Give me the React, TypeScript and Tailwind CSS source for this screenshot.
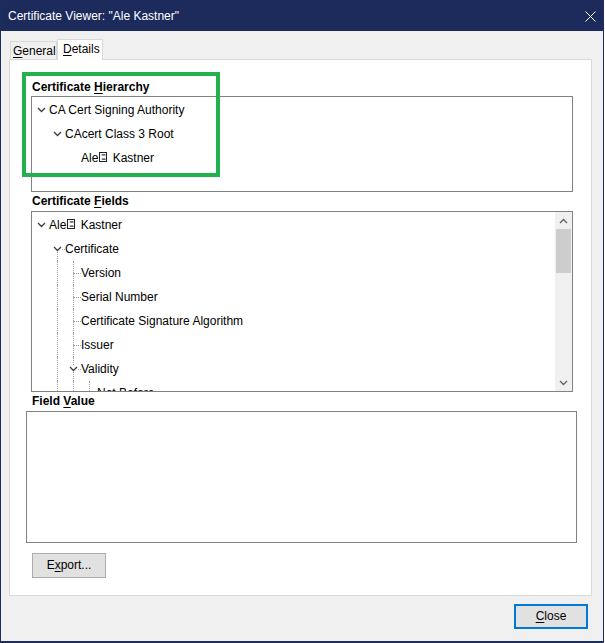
import React from "react";

type Guide = "none" | "full";

const Chevron = ({ dir = "down", color = "#3c3c3c" }: { dir?: "down" | "up"; color?: string }) => (
  <svg width="9" height="6" viewBox="0 0 9 6" className="block">
    <polyline
      points={dir === "down" ? "1,1 4.5,4.5 8,1" : "1,5 4.5,1.5 8,5"}
      fill="none"
      stroke={color}
      strokeWidth="1.3"
    />
  </svg>
);

// Box shown in place of an unprintable character (U+009A)
const HexBox = () => (
  <span className="inline-block overflow-hidden align-baseline w-[8px] h-[10px] ml-px mr-[2px] border border-[#222] font-['Liberation_Mono',monospace] text-[4px] leading-[4px] tracking-[-0.5px] text-center">
    <span className="block">00</span>
    <span className="block">9A</span>
  </span>
);

const Mn = ({ children }: { children: React.ReactNode }) => (
  <span className="underline decoration-1 underline-offset-2">{children}</span>
);

const VLine = ({ from = "top" }: { from?: "top" | "mid" }) => (
  <div
    className={
      from === "top"
        ? "absolute left-[9px] top-0 bottom-0 border-l border-dotted border-[#a0a0a0]"
        : "absolute left-[9px] top-[12px] bottom-0 border-l border-dotted border-[#a0a0a0]"
    }
  />
);

const HLine = () => (
  <div className="absolute left-[9px] top-[12px] w-[8px] border-t border-dotted border-[#a0a0a0]" />
);

function TreeRow({
  guides,
  chevron,
  v,
  h,
  children,
}: {
  guides: Guide[];
  chevron?: boolean;
  v?: "none" | "full" | "mid";
  h?: boolean;
  children: React.ReactNode;
}) {
  return (
    <div className="flex h-[24px] leading-[24px] whitespace-nowrap">
      {guides.map((g, i) => (
        <div key={i} className="relative w-[16px] h-full shrink-0">
          {g === "full" && <VLine />}
        </div>
      ))}
      <div className="relative w-[17px] h-full shrink-0">
        {v === "full" && <VLine />}
        {v === "mid" && <VLine from="mid" />}
        {h && <HLine />}
        {chevron && (
          <div className="absolute left-[5px] top-[9px] bg-white">
            <Chevron />
          </div>
        )}
      </div>
      <span>{children}</span>
    </div>
  );
}

function SimpleRow({ indent, chevron, children }: { indent: 0 | 1 | 2; chevron?: boolean; children: React.ReactNode }) {
  const pad = indent === 0 ? "pl-0" : indent === 1 ? "pl-[16px]" : "pl-[32px]";
  return (
    <div className={`flex h-[24px] leading-[24px] whitespace-nowrap ${pad}`}>
      <div className="w-[17px] h-full shrink-0 flex items-center pl-[5px]">{chevron && <Chevron />}</div>
      <span>{children}</span>
    </div>
  );
}

export default function App() {
  return (
    <div className="w-[604px] h-[643px] flex flex-col bg-[#f0f0f0] border border-b-2 border-[#1f2d5e] font-['Liberation_Sans',Arial,sans-serif] text-[12px] text-black">
      {/* title bar */}
      <div className="h-[30px] shrink-0 bg-[#1c2a5c] flex items-center justify-between pl-[7px] pr-[7px] text-white">
        <span className="leading-[16px]">Certificate Viewer: "Ale Kastner"</span>
        <svg width="11" height="11" viewBox="0 0 11 11" className="block">
          <line x1="0.5" y1="0.5" x2="10.5" y2="10.5" stroke="#fff" strokeWidth="1" />
          <line x1="10.5" y1="0.5" x2="0.5" y2="10.5" stroke="#fff" strokeWidth="1" />
        </svg>
      </div>

      <div className="flex-1 flex flex-col pl-[8px] pr-[11px] pt-[8px]">
        {/* tabs */}
        <div className="flex items-end h-[20px]">
          <div className="ml-px w-[47px] h-[18px] pl-[2px] leading-[18px] border border-b-0 border-[#d9d9d9] bg-[#f0f0f0]">
            <Mn>G</Mn>eneral
          </div>
          <div className="relative z-10 -mb-px w-[46px] h-[21px] pl-[5px] leading-[19px] border border-b-0 border-[#d9d9d9] bg-white">
            <Mn>D</Mn>etails
          </div>
        </div>

        {/* tab page */}
        <div className="relative w-[583px] h-[537px] shrink-0 bg-white border border-[#d9d9d9] flex flex-col">
          <div className="ml-[22px] mt-[19px] h-[16px] leading-[16px] font-bold">
            Certificate <Mn>H</Mn>ierarchy
          </div>
          <div className="ml-[21px] mt-px w-[542px] h-[96px] shrink-0 border border-[#828282] pt-px">
            <SimpleRow indent={0} chevron>
              CA Cert Signing Authority
            </SimpleRow>
            <SimpleRow indent={1} chevron>
              CAcert Class 3 Root
            </SimpleRow>
            <SimpleRow indent={2}>
              Ale
              <HexBox /> Kastner
            </SimpleRow>
          </div>

          <div className="ml-[22px] mt-px h-[16px] leading-[16px] font-bold">
            Certificate <Mn>F</Mn>ields
          </div>
          <div className="ml-[21px] mt-[2px] w-[542px] h-[181px] shrink-0 border border-[#828282] flex">
            <div className="flex-1 overflow-hidden pt-px">
              <TreeRow guides={[]} chevron>
                Ale
                <HexBox /> Kastner
              </TreeRow>
              <TreeRow guides={["none"]} chevron v="mid" h>
                Certificate
              </TreeRow>
              <TreeRow guides={["none", "full"]} v="full" h>
                Version
              </TreeRow>
              <TreeRow guides={["none", "full"]} v="full" h>
                Serial Number
              </TreeRow>
              <TreeRow guides={["none", "full"]} v="full" h>
                Certificate Signature Algorithm
              </TreeRow>
              <TreeRow guides={["none", "full"]} v="full" h>
                Issuer
              </TreeRow>
              <TreeRow guides={["none", "full"]} chevron v="full" h>
                Validity
              </TreeRow>
              <TreeRow guides={["none", "full", "full"]} v="full" h>
                Not Before
              </TreeRow>
            </div>
            {/* vertical scrollbar */}
            <div className="w-[17px] shrink-0 bg-[#f0f0f0] flex flex-col">
              <div className="h-[17px] flex items-center justify-center">
                <Chevron dir="up" color="#606060" />
              </div>
              <div className="h-[44px] mx-px bg-[#cdcdcd]" />
              <div className="flex-1" />
              <div className="h-[17px] flex items-center justify-center">
                <Chevron color="#606060" />
              </div>
            </div>
          </div>

          <div className="ml-[22px] mt-px h-[16px] leading-[16px] font-bold">
            Field <Mn>V</Mn>alue
          </div>
          <div className="ml-[16px] mt-[2px] w-[551px] h-[132px] shrink-0 border border-[#828282]" />

          <button className="ml-[22px] mt-[10px] w-[74px] h-[25px] shrink-0 bg-[#e1e1e1] border border-[#adadad] leading-[23px] text-center">
            E<Mn>x</Mn>port...
          </button>

          {/* highlight frame */}
          <div className="absolute left-[12px] top-[12px] w-[198px] h-[105px] border-4 border-[#22b14c]" />
        </div>

        <button className="self-end mt-[8px] mr-[4px] w-[74px] h-[25px] bg-[#e1e1e1] border-2 border-[#0078d7] leading-[21px] text-center">
          <Mn>C</Mn>lose
        </button>
      </div>
    </div>
  );
}
